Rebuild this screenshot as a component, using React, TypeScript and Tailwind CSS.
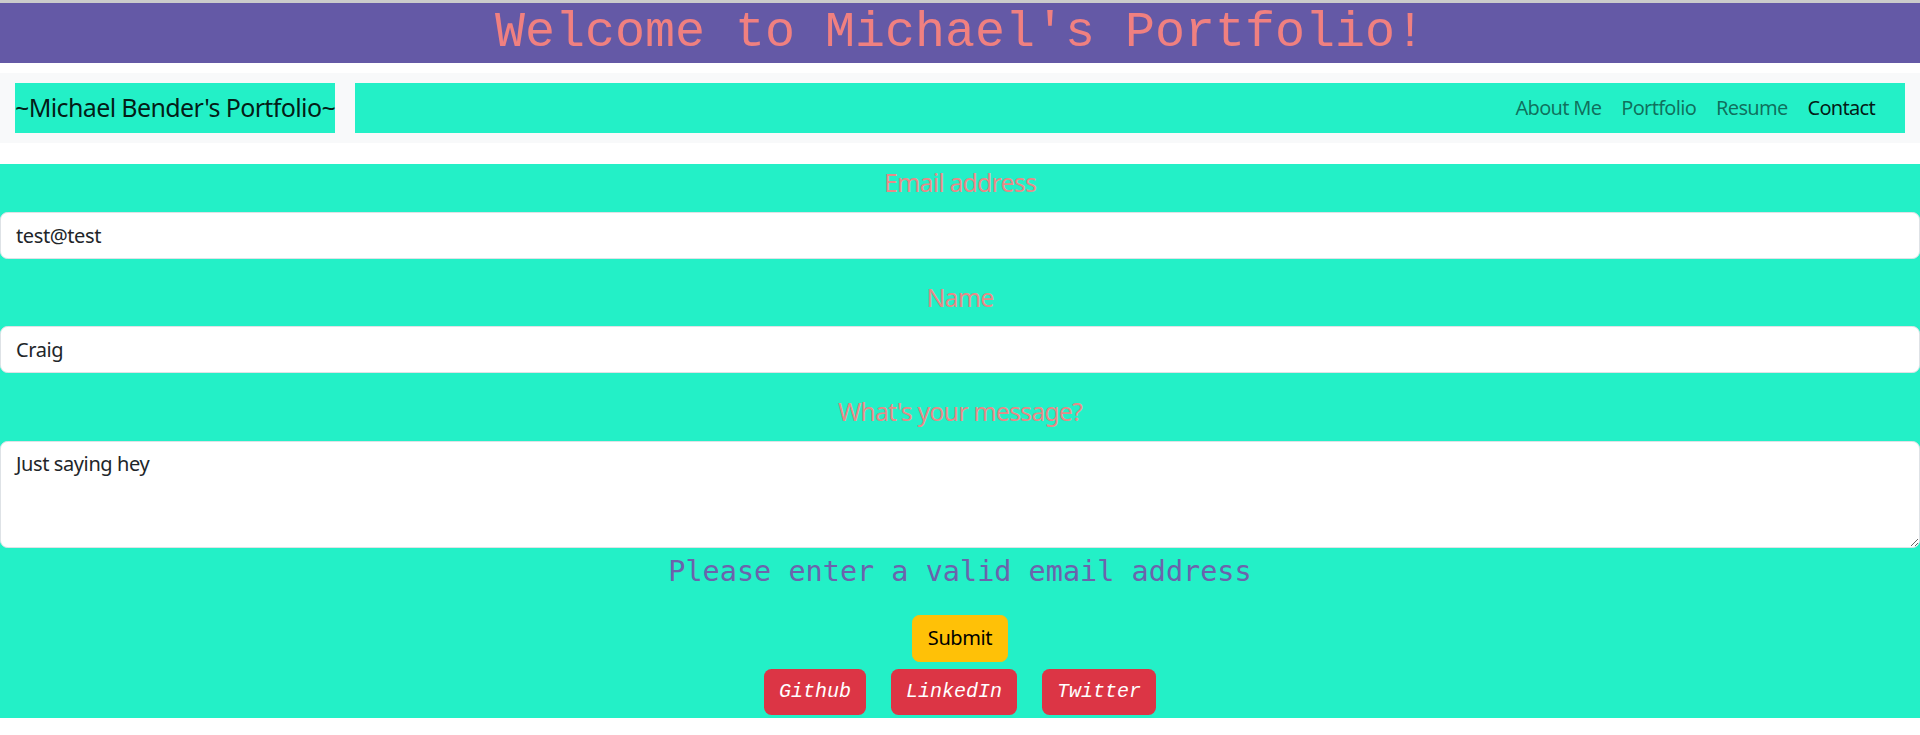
const teal = "bg-[#23f0c7]";

function Field({ label, value }: { label: string; value: string }) {
  return (
    <div className="mb-[20px]">
      <label className="mb-[10px] block text-center text-[25px] leading-[37.5px] tracking-[-0.035em] text-[#e88a88]">
        {label}
      </label>
      <input
        type="text"
        defaultValue={value}
        className="block h-[47px] w-full rounded-[7.5px] border border-[#dee2e6] bg-white px-[15px] text-[20px] tracking-[-0.02em] text-[#212529] outline-none"
      />
    </div>
  );
}

export default function App() {
  const links = ["About Me", "Portfolio", "Resume"];
  return (
    <div className="min-h-screen bg-white font-['Noto_Sans',sans-serif]">
      <header className="border-t-[3px] border-[#cbcbcb] bg-[#6459a6]">
        <h1 className="text-center font-['Liberation_Mono',monospace] text-[50px] leading-[60px] text-[#f08080]">
          Welcome to Michael's Portfolio!
        </h1>
      </header>

      <nav className="mt-[10px] flex bg-[#f8f9fa] px-[15px] py-[10px]">
        <a className={`${teal} mr-[20px] py-[6.25px] text-[25px] leading-[37.5px] tracking-[-0.025em] text-black/90`}>
          ~Michael Bender's Portfolio~
        </a>
        <div className={`${teal} flex flex-1 items-center justify-end pr-[20px]`}>
          <ul className="flex">
            {links.map((l) => (
              <li key={l}>
                <a className="block px-[10px] text-[20px] leading-[30px] tracking-[-0.035em] text-black/55">{l}</a>
              </li>
            ))}
            <li>
              <a className="block px-[10px] text-[20px] leading-[30px] tracking-[-0.035em] text-black/90">Contact</a>
            </li>
          </ul>
        </div>
      </nav>

      <main className={`${teal} mt-[21px] pb-[3px]`}>
        <Field label="Email address" value="test@test" />
        <Field label="Name" value="Craig" />
        <div className="mb-[7px]">
          <label className="mb-[10px] block text-center text-[25px] leading-[37.5px] tracking-[-0.035em] text-[#e88a88]">
            What's your message?
          </label>
          <textarea
            rows={3}
            defaultValue="Just saying hey"
            className="block h-[107px] w-full rounded-[7.5px] border border-[#dee2e6] bg-white px-[15px] py-[7.5px] text-[20px] leading-[30px] tracking-[-0.02em] text-[#212529] outline-none"
          />
        </div>
        <p className="text-center font-['DejaVu_Sans_Mono',monospace] text-[28.5px] leading-[34px] text-[#6c63ac]">
          Please enter a valid email address
        </p>
        <div className="mt-[26px] flex justify-center">
          <button className="h-[47px] rounded-[7.5px] border border-[#ffc107] bg-[#ffc107] px-[15px] text-[20px] leading-[30px] tracking-[-0.02em] text-black">
            Submit
          </button>
        </div>
        <div className="mt-[7px] flex justify-center gap-[25px]">
          {["Github", "LinkedIn", "Twitter"].map((s) => (
            <a
              key={s}
              className="flex h-[46px] items-center rounded-[7.5px] bg-[#dc3545] px-[15px] font-['Liberation_Mono',monospace] text-[20px] italic text-white"
            >
              {s}
            </a>
          ))}
        </div>
      </main>
    </div>
  );
}
